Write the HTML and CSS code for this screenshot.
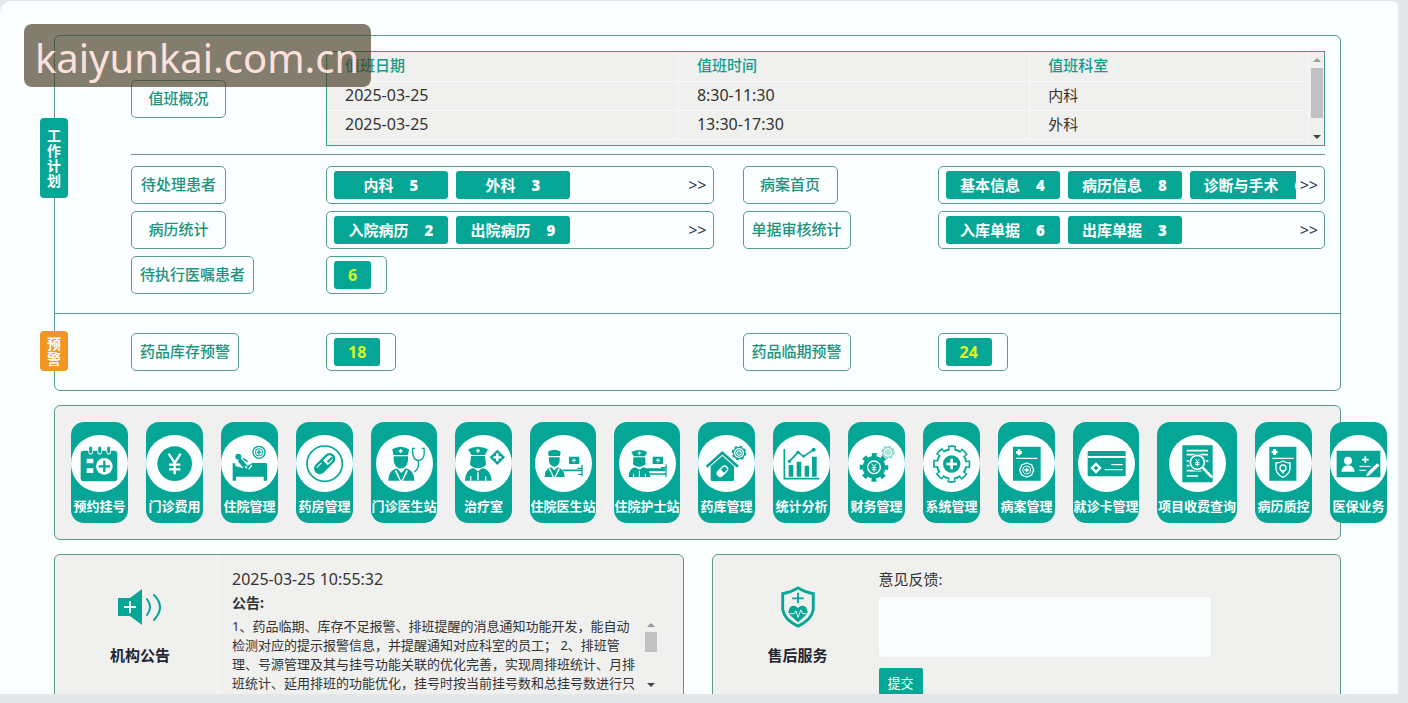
FILE: index.html
```html
<!DOCTYPE html>
<html lang="zh-CN">
<head>
<meta charset="utf-8">
<title>工作台</title>
<link rel="stylesheet" href="styles.css">
</head>
<body>
<div class="site-badge">kaiyunkai.com.cn</div>
<main class="sheet">
  <section class="panel overview">
    <div class="work">
      <h2 class="side-tab work-tab">工作计划</h2>
      <div class="duty">
        <div class="label-cell"><span class="label">值班概况</span></div>
        <div class="duty-box">
          <table class="duty-table">
            <thead><tr><th>值班日期</th><th>值班时间</th><th>值班科室</th></tr></thead>
            <tbody>
              <tr><td>2025-03-25</td><td>8:30-11:30</td><td>内科</td></tr>
              <tr><td>2025-03-25</td><td>13:30-17:30</td><td>外科</td></tr>
            </tbody>
          </table>
          <div class="scrollbar"><i class="arrow-up"></i><i class="thumb"></i><i class="arrow-down"></i></div>
        </div>
      </div>
      <div class="pairs">
        <div class="pair">
          <span class="label">待处理患者</span>
          <div class="chip-box"><div class="chips"><button class="chip">内科<b>5</b></button><button class="chip">外科<b>3</b></button></div><a class="more" href="#">&gt;&gt;</a></div>
        </div>
        <div class="pair">
          <span class="label">病案首页</span>
          <div class="chip-box"><div class="chips"><button class="chip">基本信息<b>4</b></button><button class="chip">病历信息<b>8</b></button><button class="chip">诊断与手术<b>6</b></button></div><a class="more" href="#">&gt;&gt;</a></div>
        </div>
        <div class="pair">
          <span class="label">病历统计</span>
          <div class="chip-box"><div class="chips"><button class="chip">入院病历<b>2</b></button><button class="chip">出院病历<b>9</b></button></div><a class="more" href="#">&gt;&gt;</a></div>
        </div>
        <div class="pair">
          <span class="label">单据审核统计</span>
          <div class="chip-box"><div class="chips"><button class="chip">入库单据<b>6</b></button><button class="chip">出库单据<b>3</b></button></div><a class="more" href="#">&gt;&gt;</a></div>
        </div>
        <div class="pair">
          <span class="label">待执行医嘱患者</span>
          <div class="count-box"><button class="count">6</button></div>
        </div>
      </div>
    </div>
    <div class="warn">
      <h2 class="side-tab warn-tab">预警</h2>
      <div class="pairs">
        <div class="pair"><span class="label">药品库存预警</span><div class="count-box"><button class="count">18</button></div></div>
        <div class="pair"><span class="label">药品临期预警</span><div class="count-box"><button class="count">24</button></div></div>
      </div>
    </div>
  </section>

  <nav class="panel modules">
    <button class="module">
      <svg class="disc" viewBox="0 0 171 171"><rect class="f" x="29" y="47" width="110" height="92" rx="9"/><g class="wl" stroke-width="14" stroke-linecap="round"><path d="M59 42v10M86 42v10M113 42v10"/></g><g class="l" stroke-width="9" stroke-linecap="round"><path d="M59 39v12M86 39v12M113 39v12"/></g><path class="w" d="M47 71h20v14H47zM47 100h20v14H47z"/><circle class="w" cx="100" cy="94" r="25"/><path class="l" stroke-width="7" d="M100 77v34M83 94h34"/></svg>
      <span>预约挂号</span></button>
    <button class="module">
      <svg class="disc" viewBox="0 0 171 171"><circle class="f" cx="86" cy="86" r="52"/><path class="wl" stroke-width="7" d="M68 56l18 28 18-28M86 84v34M69 89h34M69 103h34"/></svg>
      <span>门诊费用</span></button>
    <button class="module">
      <svg class="disc" viewBox="0 0 171 171"><path class="f" d="M35 85h8v8l22 6 68-3v-11h5v52h-10v-12H45v12H35z"/><circle class="f" cx="52" cy="65" r="9"/><path class="l" stroke-width="13" stroke-linecap="round" stroke-linejoin="round" d="M58 78l14 16"/><path class="l" stroke-width="5" d="M66 70l14 10"/><path class="f" d="M72 97l22-13h40v18H76z"/><path class="wl" stroke-width="4" d="M72 94l6 6M83 103l10-13"/><circle class="l" cx="114" cy="52" r="18" stroke-width="4"/><circle class="l" cx="114" cy="52" r="11" stroke-width="3"/><path class="l" stroke-width="4" d="M114 45v14M107 52h14"/></svg>
      <span>住院管理</span></button>
    <button class="module">
      <svg class="disc" viewBox="0 0 171 171"><circle class="l" cx="86" cy="86" r="53" stroke-width="5"/><g transform="rotate(45 86 86)"><rect class="f" x="69" y="48" width="34" height="76" rx="17"/><path class="w" d="M76 83V65a10 10 0 0 1 20 0v18z"/><path class="f" d="M86 56h6v21h-6z"/><path class="w" d="M76 91h3v20h-3z"/></g></svg>
      <span>药房管理</span></button>
    <button class="module module-wide">
      <svg class="disc" viewBox="0 0 171 171"><path class="f" d="M49 43q25-16 50 0l-3 17H52z"/><path class="f" d="M53 64h43v11a21 25 0 0 1-43 0z"/><path class="f" d="M37 137q0-32 26-37l13 15 13-15q26 5 26 37z"/><path class="w" d="M61 105l15 32 15-32 5 3-16 31h-8l-16-31z"/><path class="f" d="M76 112l7 10-7 15-7-15z"/><path class="wl" stroke-width="4" d="M74 42v12M68 48h12"/><path class="l" stroke-width="4" d="M117 40h-7q-2 36 18 36t16-36h-7M127 76v18q-2 10-12 17"/></svg>
      <span>门诊医生站</span></button>
    <button class="module">
      <svg class="disc" viewBox="0 0 171 171"><path class="f" d="M39 43q30-16 60 0l-9 17H50z"/><path class="f" d="M48 63h42l3 26q-8 10-24 10T45 89z"/><path class="f" d="M30 137q1-32 25-38l14 10 14-10q25 6 27 38z"/><path class="wl" stroke-width="4" d="M69 41v12M63 47h12M69 112v24M47 124v13M92 124v13"/><path class="f" d="M127 44l23 23-23 23-23-23z"/><path class="wl" stroke-width="7" d="M127 55v24M115 67h24"/></svg>
      <span>治疗室</span></button>
    <button class="module module-wide">
      <svg class="disc" viewBox="0 0 171 171"><path class="f" d="M39 50q19-11 38 0l-2 13H41z"/><path class="f" d="M42 67h32v9a16 19 0 0 1-32 0z"/><path class="f" d="M29 126q0-24 19-29l10 9 10-9q19 5 21 29z"/><path class="w" d="M45 100l13 26 13-26 4 2-13 25h-8l-13-25z"/><path class="f" d="M58 106l6 8-6 12-6-12zM102 65h31v22h-31z"/><path class="wl" stroke-width="3" d="M117 70v12M111 76h12"/><path class="l" stroke-width="5" d="M83 106h58"/><path class="l" stroke-width="4" d="M141 90v34M128 100h13M130 118h12"/></svg>
      <span>住院医生站</span></button>
    <button class="module module-wide">
      <svg class="disc" viewBox="0 0 171 171"><path class="f" d="M37 51q24-12 48 0l-7 13H44z"/><path class="f" d="M43 67h35l2 21q-8 8-19 8t-19-8z"/><path class="f" d="M29 126q0-25 20-29l12 7 12-7q20 4 21 29z"/><path class="wl" stroke-width="3" d="M61 49v10M56 54h10M61 108v18M44 116v10M79 116v10"/><path class="f" d="M101 65h31v22h-31z"/><path class="wl" stroke-width="3" d="M117 70v12M111 76h12"/><path class="l" stroke-width="9" d="M80 104h58"/><path class="l" stroke-width="4" d="M141 88v38M126 98h15M92 117h50"/></svg>
      <span>住院护士站</span></button>
    <button class="module">
      <svg class="disc" viewBox="0 0 171 171"><path class="l" stroke-width="8" d="M26 95l47-42 47 42"/><path class="f" d="M38 94l35-31 35 31v40q0 4-4 4H42q-4 0-4-4z"/><g transform="rotate(45 74 108)"><rect class="wl" x="65" y="91" width="18" height="36" rx="9" stroke-width="4"/><path class="w" d="M65 109h18v9a9 9 0 0 1-18 0z"/></g><circle class="l" cx="123" cy="54" r="17" stroke-width="4"/><circle class="l" cx="123" cy="54" r="20" stroke-width="4" stroke-dasharray="8 8"/><circle class="l" cx="123" cy="54" r="10" stroke-width="3"/><path class="l" stroke-width="3" d="M123 48v12M117 54h12"/></svg>
      <span>药库管理</span></button>
    <button class="module">
      <svg class="disc" viewBox="0 0 171 171"><path class="l" stroke-width="5" d="M34 42v89h105"/><path class="f" d="M47 90h14v35H47zM71 80h14v45H71zM95 92h13v33H95zM117 65h14v60h-14z"/><path class="l" stroke-width="5" d="M49 79l26-27 17 12 30-20"/><g class="f"><circle cx="49" cy="79" r="5"/><circle cx="75" cy="52" r="5"/><circle cx="92" cy="64" r="4"/><circle cx="122" cy="44" r="6"/></g></svg>
      <span>统计分析</span></button>
    <button class="module">
      <svg class="disc" viewBox="0 0 171 171"><circle class="f" cx="78" cy="97" r="34"/><circle class="l" cx="78" cy="97" r="36" stroke-width="14" pathLength="80" stroke-dasharray="5 5" stroke-dashoffset="2.5"/><circle class="wl" cx="78" cy="97" r="19" stroke-width="4"/><path class="wl" stroke-width="3" d="M71 86l7 9 7-9M78 95v15M71 98h14M71 104h14"/><g class="pale"><circle class="l" cx="120" cy="52" r="15" stroke-width="4"/><circle class="l" cx="120" cy="52" r="18" stroke-width="4" stroke-dasharray="7 7"/><circle class="l" cx="120" cy="52" r="8" stroke-width="3"/><path class="l" stroke-width="3" d="M120 47v10M115 52h10"/></g></svg>
      <span>财务管理</span></button>
    <button class="module">
      <svg class="disc" viewBox="0 0 171 171"><circle class="f" cx="86" cy="87" r="47"/><circle class="l" cx="86" cy="87" r="49" stroke-width="14" pathLength="80" stroke-dasharray="6 4" stroke-dashoffset="3"/><circle class="wl" cx="86" cy="87" r="45" stroke-width="12" pathLength="80" stroke-dasharray="4 6" stroke-dashoffset="2"/><circle class="w" cx="86" cy="87" r="41"/><circle class="f" cx="86" cy="87" r="26"/><path class="wl" stroke-width="8" d="M86 71v32M70 87h32"/></svg>
      <span>系统管理</span></button>
    <button class="module">
      <svg class="disc" viewBox="0 0 171 171"><path class="f" d="M45 35h83v102H45z"/><path class="wl" stroke-width="8" d="M63 43v18M54 52h18"/><path class="wl" stroke-width="4" d="M54 70h64"/><path class="wl" stroke-width="4" d="M86 84l15 6 6 15-6 15-15 6-15-6-6-15 6-15z"/><circle class="wl" cx="86" cy="105" r="12" stroke-width="3"/><path class="wl" stroke-width="4" d="M86 98v14M79 105h14"/></svg>
      <span>病案管理</span></button>
    <button class="module module-wide">
      <svg class="disc" viewBox="0 0 171 171"><rect class="f" x="29" y="48" width="114" height="76" rx="3"/><path class="wl" stroke-width="6" d="M29 66h114"/><path class="wl" stroke-width="7" d="M54 87l12 12-12 12-12-12z"/><path class="wl" stroke-width="4" d="M100 89h34M80 104h54"/></svg>
      <span>就诊卡管理</span></button>
    <button class="module module-widest">
      <svg class="disc" viewBox="0 0 171 171"><path class="f" d="M40 31h91v111H40z"/><path class="wl" stroke-width="5" d="M53 47h64M53 59h64M53 78h14M53 92h14M53 107h44M53 123h34M108 78h10"/><circle class="f" cx="85" cy="82" r="26"/><circle class="wl" cx="85" cy="82" r="21" stroke-width="5"/><path class="wl" stroke-width="3" d="M79 72l6 8 6-8M85 80v14M78 83h14M78 88h14"/><path class="wl" stroke-width="8" d="M101 98l28 29"/></svg>
      <span>项目收费查询</span></button>
    <button class="module">
      <svg class="disc" viewBox="0 0 171 171"><path class="f" d="M43 35h81v102H43z"/><path class="wl" stroke-width="8" d="M59 42v18M50 51h18"/><path class="wl" stroke-width="4" d="M52 70h64"/><path class="wl" stroke-width="4" d="M84 78q10 6 21 6v18q-2 16-21 25-19-9-21-25V84q11 0 21-6z"/><circle class="wl" cx="84" cy="99" r="9" stroke-width="4"/><path class="w" d="M76 105h16l-8 12z"/></svg>
      <span>病历质控</span></button>
    <button class="module">
      <svg class="disc" viewBox="0 0 171 171"><rect class="f" x="20" y="47" width="131" height="80" rx="2"/><circle class="w" cx="54" cy="77" r="12"/><path class="w" d="M34 110q2-18 20-19 18 1 20 19z"/><path class="wl" stroke-width="5" d="M106 64v20M96 74h20"/><path class="wl" stroke-width="3" d="M88 94h34M88 106h20"/><path class="wl" stroke-width="10" d="M145 88l-27 26"/><path class="w" d="M114 111l8 8-14 5z"/></svg>
      <span>医保业务</span></button>
  </nav>

  <div class="bottom">
    <section class="panel info">
      <div class="info-side">
        <svg class="speaker" viewBox="0 0 44 38"><path class="f" d="M0 10h12L24 1v36l-12-9H0z"/><path class="wl" stroke-width="2" d="M12 13v12M6 19h12"/><path class="l" stroke-width="2" stroke-linecap="round" d="M29 11q6 8 0 16M36 7q12 12 0 25"/></svg>
        <h3>机构公告</h3>
      </div>
      <div class="info-main news">
        <time>2025-03-25 10:55:32</time>
        <h4>公告:</h4>
        <div class="news-scroll">
          <p>1、药品临期、库存不足报警、排班提醒的消息通知功能开发，能自动<br>检测对应的提示报警信息，并提醒通知对应科室的员工； 2、排班管<br>理、号源管理及其与挂号功能关联的优化完善，实现周排班统计、月排<br>班统计、延用排班的功能优化，挂号时按当前挂号数和总挂号数进行只</p>
          <div class="scrollbar news-bar"><i class="arrow-up"></i><i class="thumb"></i><i class="arrow-down"></i></div>
        </div>
      </div>
    </section>
    <section class="panel info">
      <div class="info-side">
        <svg class="shield" viewBox="0 0 36 44"><path class="l" stroke-width="3" d="M18 2q8 5 16 6v17q-2 11-16 17Q4 36 2 25V8q8-1 16-6z"/><path class="l" stroke-width="2" d="M18 7v11M12 13h12"/><path class="f" d="M18 23q-4-4-8-1-4 5 0 9l8 7 8-7q4-4 0-9-4-3-8 1z"/><path class="wl" stroke-width="1" d="M9 29h5l2-3 2 7 3-8 2 4h4"/></svg>
        <h3>售后服务</h3>
      </div>
      <form class="info-main feedback">
        <label for="feedback">意见反馈:</label>
        <textarea id="feedback"></textarea>
        <button class="submit" type="button">提交</button>
      </form>
    </section>
  </div>
</main>
</body>
</html>
```

FILE: styles.css
```css
:root {
  --teal: #06a696;
  --line: #5a9c89;
  --label: #22927c;
}
* { box-sizing: border-box; }
body {
  margin: 0;
  background: #e5e6e8;
  color: #333;
  font: 15px/20px "Noto Sans", "Noto Sans CJK SC", sans-serif;
  height: 100vh;
  padding: 1px 10px 9px 0;
  overflow: hidden;
}
h2, h3, h4, p { margin: 0; }
button { border: 0; padding: 0; margin: 0; font: inherit; cursor: pointer; }

.site-badge {
  position: absolute;
  z-index: 2;
  left: 24px;
  top: 24px;
  height: 63px;
  padding: 0 12px 0 11px;
  border-radius: 8px;
  background: rgba(66, 56, 30, .65);
  color: #fde0de;
  font-size: 40px;
  line-height: 68px;
}
.sheet {
  height: 100%;
  overflow: hidden;
  padding: 34px 57px 0 54px;
  border-radius: 12px 6px 0 0;
  background: #fafefe;
  display: flex;
  flex-direction: column;
  gap: 14px;
}
.panel { border: 1px solid var(--line); border-radius: 6px; flex-shrink: 0; }

.work { position: relative; padding: 15px 15px 19px 76px; border-bottom: 1px solid var(--line); }
.warn { position: relative; padding: 19px 15px 19px 76px; }
.side-tab {
  position: absolute;
  left: -15px;
  width: 28px;
  padding: 10px 7px;
  border-radius: 4px;
  background: var(--teal);
  color: #fff;
  font-size: 14px;
  line-height: 15px;
  font-weight: 700;
  word-break: break-all;
}
.work-tab { top: 82px; }
.warn-tab { top: 17px; padding: 5px 7px; background: #f3961f; }

.duty {
  display: grid;
  grid-template-columns: 195px 1fr;
  align-items: center;
  padding-bottom: 8px;
  border-bottom: 1px solid #6f8f88;
}
.label {
  display: inline-flex;
  align-items: center;
  justify-content: center;
  justify-self: start;
  height: 38px;
  min-width: 95px;
  padding: 0 8px 2px;
  border: 1px solid var(--line);
  border-radius: 5px;
  color: var(--label);
  font-weight: 500;
  white-space: nowrap;
}
.duty-box {
  display: flex;
  height: 95px;
  border: 1px solid #3c9c8c;
  background: #f0f0ef;
  overflow: hidden;
}
.duty-table {
  flex: 1;
  table-layout: fixed;
  border-collapse: collapse;
  font-size: 16px;
  height: 88px;
}
.duty-table th, .duty-table td {
  height: 29px;
  padding: 0 0 2px 18px;
  text-align: left;
  border-right: 1px solid #f8f9f9;
  border-bottom: 1px solid #f8f9f9;
  font-weight: 400;
}
.duty-table th { width: 35.8%; font-size: 15px; font-weight: 500; color: #149c8a; }
.duty-table th:last-child { width: 28.4%; }
.duty-table td:last-child { font-size: 15px; }
.scrollbar {
  width: 15px;
  display: flex;
  flex-direction: column;
  align-items: center;
  padding: 6px 0;
}
.arrow-up { border: 4px solid transparent; border-top: 0; border-bottom-color: #9a9a9a; }
.arrow-down { border: 4px solid transparent; border-bottom: 0; border-top-color: #444; margin-top: auto; }
.thumb { width: 12px; height: 50px; margin-top: 6px; background: #c1c1c3; }

.pairs { display: grid; grid-template-columns: 1fr 1fr; gap: 7px 29px; }
.work .pairs { margin-top: 11px; }
.pair { display: grid; grid-template-columns: 195px minmax(0, 1fr); }
.chip-box, .count-box {
  display: flex;
  align-items: center;
  height: 38px;
  border: 1px solid var(--line);
  border-radius: 5px;
  padding: 0 4px 0 7px;
}
.chips { display: flex; gap: 8px; flex: 1; min-width: 0; overflow: hidden; }
.chip {
  display: inline-flex;
  align-items: center;
  justify-content: center;
  gap: 16px;
  flex-shrink: 0;
  min-width: 114px;
  height: 28px;
  padding: 0 14px;
  border-radius: 3px;
  background: var(--teal);
  color: #fff;
  font-weight: 700;
  white-space: nowrap;
}
.more { padding: 0 2px 0 4px; color: #2d3f58; text-decoration: none; font-size: 16px; }
.count-box { justify-self: start; padding-right: 15px; }
.count {
  height: 28px;
  padding: 0 14px;
  border-radius: 3px;
  background: var(--teal);
  color: #d9f727;
  font-size: 16px;
  font-weight: 700;
}

.modules {
  display: flex;
  gap: 18px;
  padding: 16px;
  background: #f0f0f0;
  white-space: nowrap;
}
.module {
  flex: none;
  width: 57px;
  padding: 13px 0 7px;
  border-radius: 13px;
  background: var(--teal);
  color: #fff;
  display: flex;
  flex-direction: column;
  align-items: center;
  gap: 4px;
  font-size: 13px;
  font-weight: 700;
}
.module-wide { width: 66px; }
.module-widest { width: 80px; }
.disc { width: 57px; height: 57px; border-radius: 50%; background: #fbffff; flex: none; }
.f { fill: var(--teal); }
.w { fill: #fbffff; }
.l { fill: none; stroke: var(--teal); }
.wl { fill: none; stroke: #fbffff; }
.pale { opacity: .5; }

.bottom { display: grid; grid-template-columns: 1fr 1fr; gap: 28px; flex-shrink: 0; }
.info {
  display: grid;
  grid-template-columns: 162px minmax(0, 1fr);
  height: 170px;
  background: #f0f0ef;
}
.info-side {
  display: flex;
  flex-direction: column;
  align-items: center;
  gap: 17px;
  padding: 31px 0 0 8px;
}
.info-side h3 { color: #22252f; font-size: 15px; line-height: 20px; }
.speaker, .shield { width: 44px; height: 42px; }
.info-main { padding: 14px 24px 0 14px; }
.news { border-left: 1px solid #f9f9f9; }
.news time { display: block; font-size: 16px; }
.news h4 { font-size: 14px; line-height: 20px; margin-top: 4px; }
.news-scroll { display: flex; font-size: 13px; line-height: 19px; margin-top: 4px; }
.news-scroll p { white-space: nowrap; width: 413px; }
.news-bar { height: 76px; }
.news-bar .thumb { height: 20px; margin-top: 5px; }
.feedback { display: flex; flex-direction: column; align-items: flex-start; padding-left: 4px; }
.feedback textarea {
  width: 332px;
  height: 60px;
  margin: 8px 0 11px;
  border: 0;
  border-radius: 3px;
  resize: none;
  background: #fafdfe;
  font: inherit;
}
.submit {
  width: 44px;
  height: 30px;
  border-radius: 2px;
  background: var(--teal);
  color: #fff;
  font-size: 13px;
}
```
